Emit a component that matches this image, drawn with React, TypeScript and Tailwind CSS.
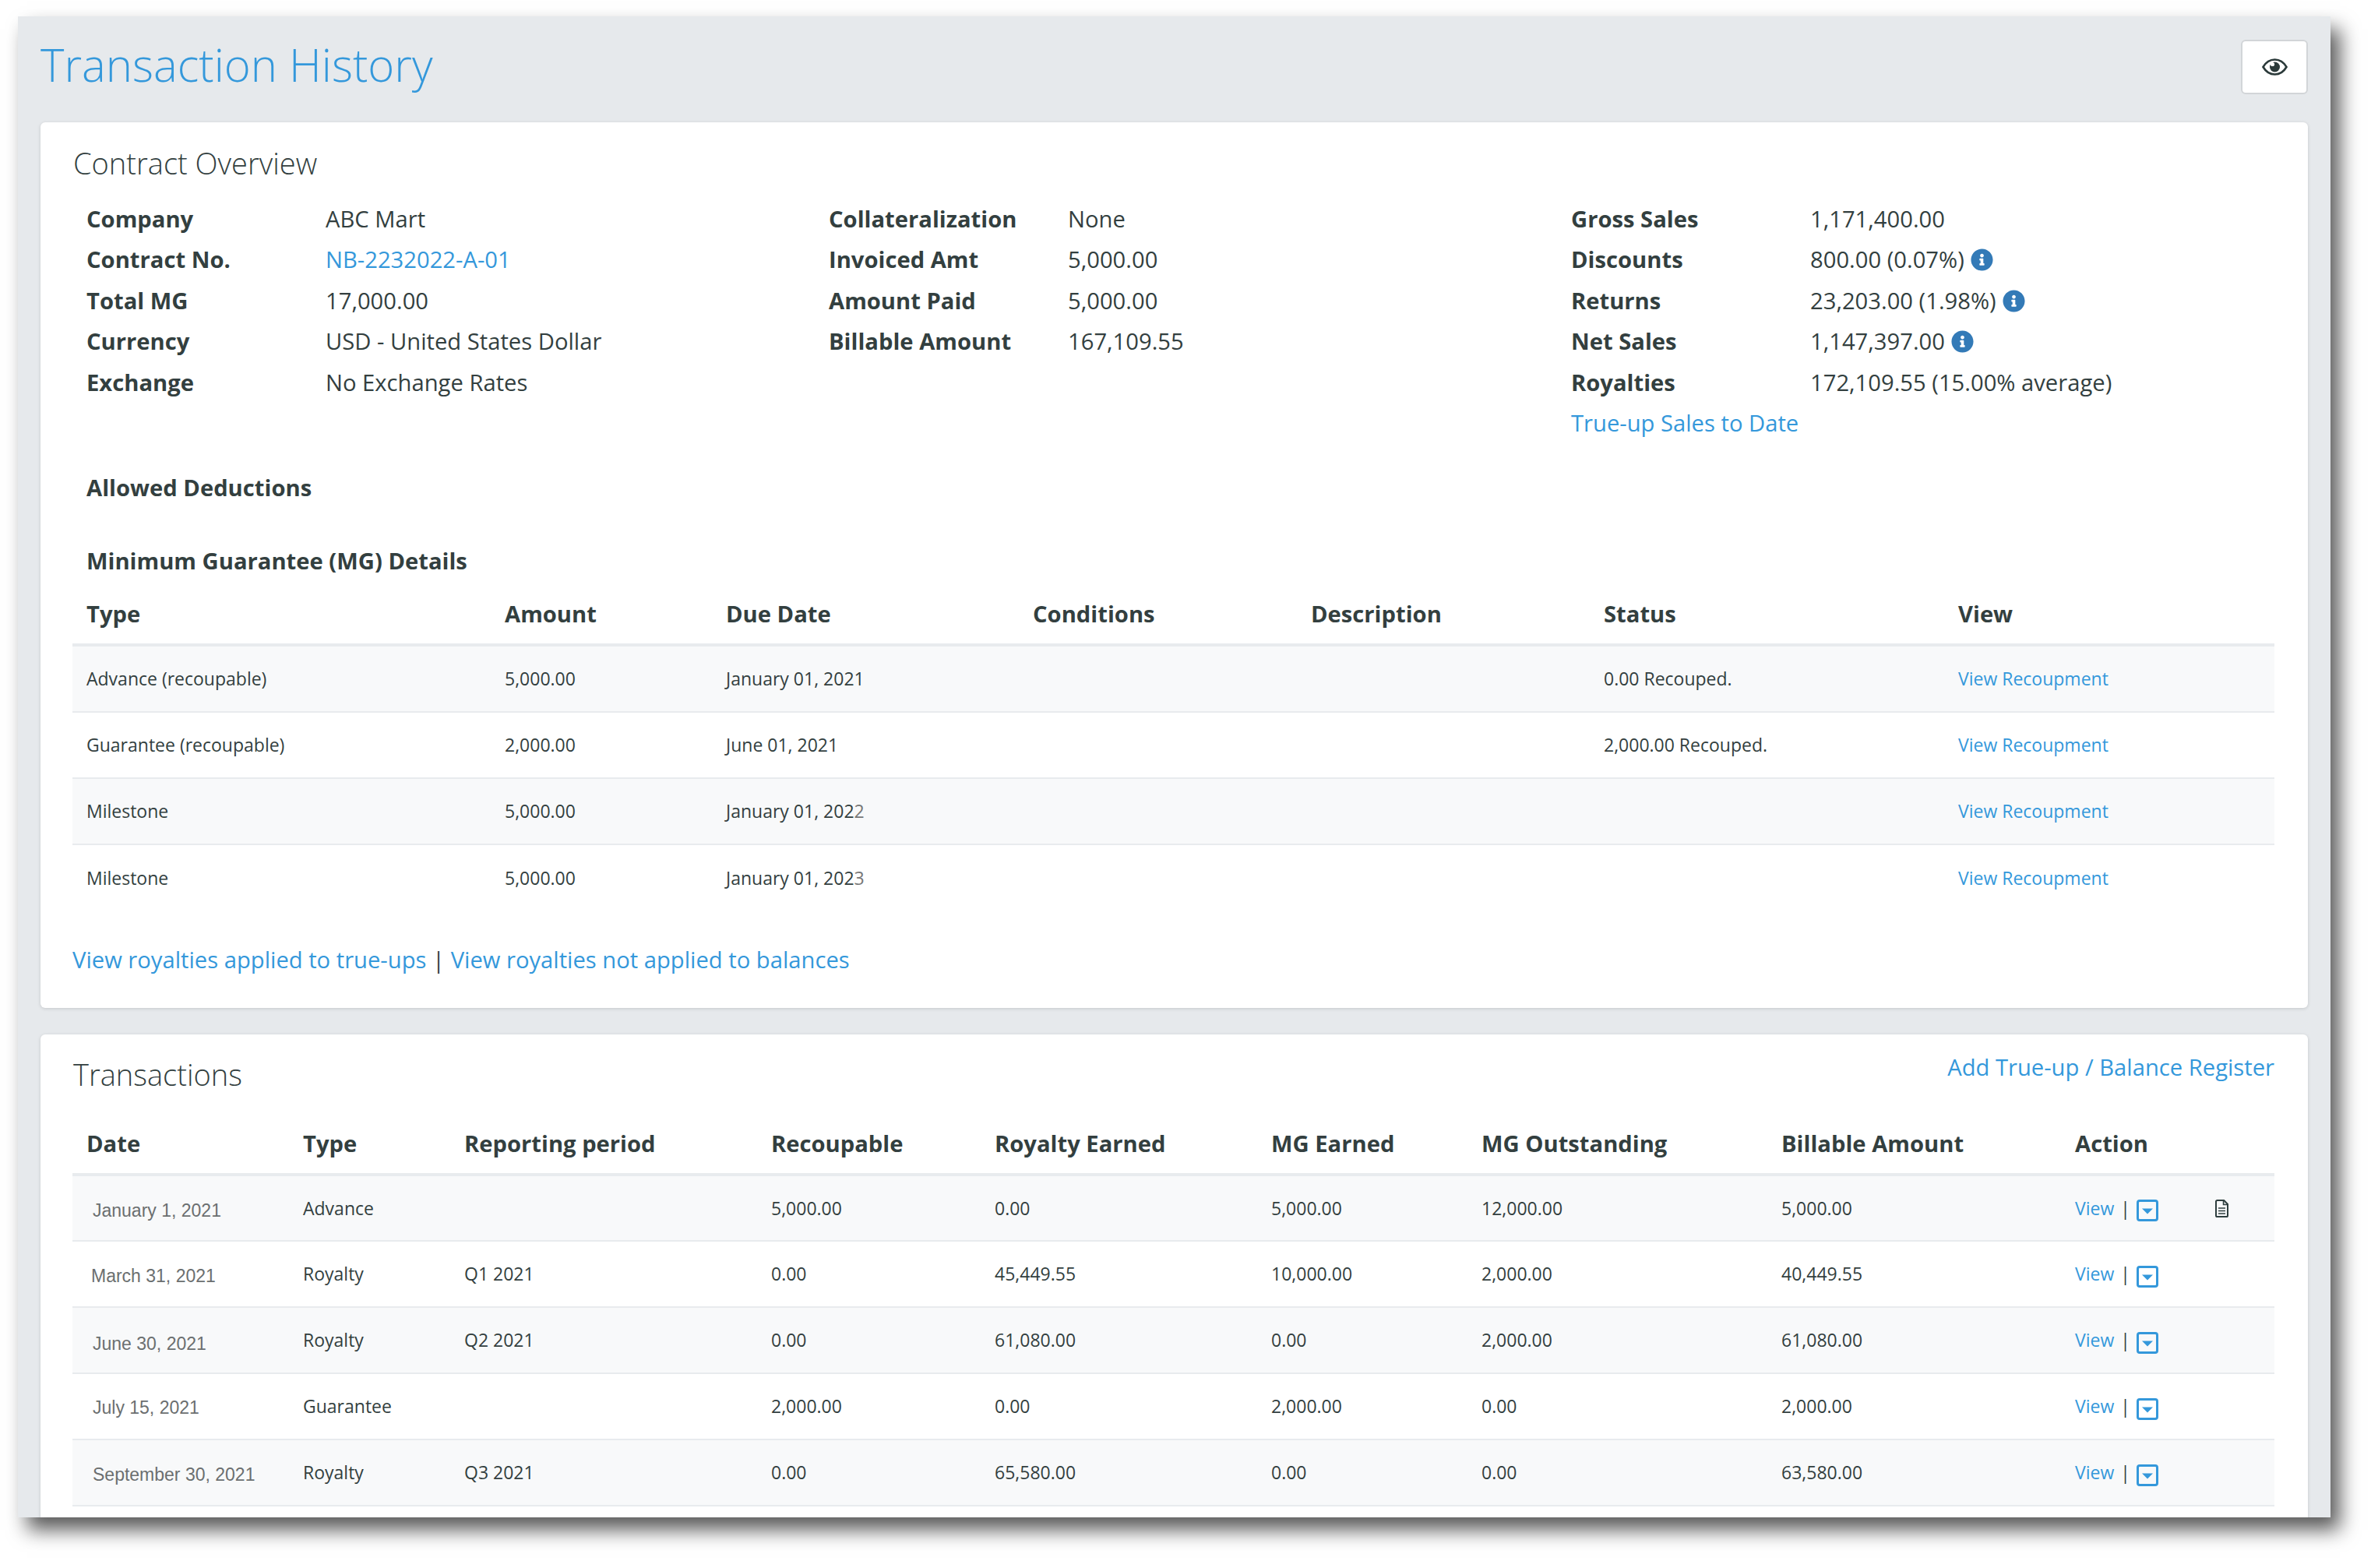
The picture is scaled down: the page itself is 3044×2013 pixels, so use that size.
import { FaInfoCircle } from "react-icons/fa";

const link = "text-[#3498db]";

const overview = [
  [
    ["Company", "ABC Mart"],
    ["Contract No.", "NB-2232022-A-01", "link"],
    ["Total MG", "17,000.00"],
    ["Currency", "USD - United States Dollar"],
    ["Exchange", "No Exchange Rates"],
  ],
  [
    ["Collateralization", "None"],
    ["Invoiced Amt", "5,000.00"],
    ["Amount Paid", "5,000.00"],
    ["Billable Amount", "167,109.55"],
  ],
  [
    ["Gross Sales", "1,171,400.00"],
    ["Discounts", "800.00 (0.07%)", "info"],
    ["Returns", "23,203.00 (1.98%)", "info"],
    ["Net Sales", "1,147,397.00", "info"],
    ["Royalties", "172,109.55 (15.00% average)"],
  ],
];

const mgRows = [
  ["Advance (recoupable)", "5,000.00", "January 01, 202", "1", "0.00 Recouped."],
  ["Guarantee (recoupable)", "2,000.00", "June 01, 202", "1", "2,000.00 Recouped."],
  ["Milestone", "5,000.00", "January 01, 202", "2", ""],
  ["Milestone", "5,000.00", "January 01, 202", "3", ""],
];

const txRows = [
  ["January 1, 2021", "Advance", "", "5,000.00", "0.00", "5,000.00", "12,000.00", "5,000.00"],
  ["March 31, 2021", "Royalty", "Q1 2021", "0.00", "45,449.55", "10,000.00", "2,000.00", "40,449.55"],
  ["June 30, 2021", "Royalty", "Q2 2021", "0.00", "61,080.00", "0.00", "2,000.00", "61,080.00"],
  ["July 15, 2021", "Guarantee", "", "2,000.00", "0.00", "2,000.00", "0.00", "2,000.00"],
  ["September 30, 2021", "Royalty", "Q3 2021", "0.00", "65,580.00", "0.00", "0.00", "63,580.00"],
];

// the dates sit a little lower than the rest of their row, not all by the same amount
const dateCell = [
  "pl-[9px] pt-[6px]",
  "pl-[7px] pt-[6px]",
  "pl-[9px] pt-[9px]",
  "pl-[9px] pt-[4px]",
  "pl-[9px] pt-[6px]",
];

const Caret = () => (
  <svg viewBox="0 0 28 28" className="w-[28px] h-[28px] text-[#3498db]">
    <rect x="1.5" y="1.5" width="25" height="25" rx="2.5" fill="none" stroke="currentColor" strokeWidth="3" />
    <path d="M7 11.5h14L14 18.5z" fill="currentColor" />
  </svg>
);

const Doc = () => (
  <svg viewBox="0 0 17 23" className="w-[17px] h-[23px] text-[#2f3f3f]">
    <path d="M2.6 1h8.6l4.8 5v14.4a1.6 1.6 0 0 1-1.6 1.6H2.6A1.6 1.6 0 0 1 1 20.4V2.6A1.6 1.6 0 0 1 2.6 1z" fill="none" stroke="currentColor" strokeWidth="2" />
    <path d="M10.6 1.5v5h5M4 11h9M4 14.5h9M4 18h9" fill="none" stroke="currentColor" strokeWidth="1.7" />
  </svg>
);

const Eye = () => (
  <svg viewBox="0 0 33 22" className="w-[33px] h-[22px] text-[#2b3a3a]">
    <path d="M1.5 11C5 5 10 1.5 16.5 1.5S28 5 31.5 11C28 17 23 20.5 16.5 20.5S5 17 1.5 11z" fill="none" stroke="currentColor" strokeWidth="2.6" />
    <circle cx="16.5" cy="11" r="6.5" fill="currentColor" />
    <circle cx="13.5" cy="7.5" r="2.6" fill="#fff" />
  </svg>
);

export default function App() {
  return (
    <div className="w-[3044px] h-[2013px] bg-white pl-[23px] pt-[21px] font-['Open_Sans',sans-serif] text-[#333f3f]">
      <div className="w-[2969px] h-[1927px] bg-[#e6e9ec] overflow-hidden shadow-[12px_16px_24px_rgba(0,0,0,0.65)] px-[29px]">
        {/* Header */}
        <div className="h-[136px] flex items-start justify-between">
          <h1 className="mt-[22px] text-[58px] leading-[80px] font-light text-[#3498db]">Transaction History</h1>
          <button className="mt-[30px] w-[86px] h-[70px] bg-white border-2 border-[#d2d5d8] rounded-[6px] flex items-center justify-center">
            <Eye />
          </button>
        </div>

        {/* Contract Overview */}
        <section className="h-[1137px] bg-white rounded-[6px] shadow-[0_1px_4px_rgba(0,0,0,0.15)] pl-[41px] pr-[43px] pt-[26px]">
          <h2 className="pl-[1px] text-[38px] leading-[52px] font-light">Contract Overview</h2>
          <div className="mt-[20px] grid grid-cols-[953px_953px_1fr] text-[29.2px] leading-[52.4px]">
            {overview.map((col, i) => (
              <div key={i} className="pl-[18px]">
                {col.map(([label, value, kind]) => (
                  <div key={label} className="flex">
                    <span className="w-[307px] font-bold shrink-0">{label}</span>
                    <span className={`flex items-center gap-[8px] ${kind === "link" ? link : ""}`}>
                      {value}
                      {kind === "info" && <FaInfoCircle className="w-[29px] h-[29px] text-[#337ab7]" />}
                    </span>
                  </div>
                ))}
                {i === 2 && <div className={link}>True-up Sales to Date</div>}
              </div>
            ))}
          </div>
          <div className="mt-[37px] pl-[18px] text-[29.2px] leading-[40px] font-bold">Allowed Deductions</div>
          <div className="mt-[54px] pl-[18px] text-[29.2px] leading-[40px] font-bold">Minimum Guarantee (MG) Details</div>

          <table className="mt-[10px] w-full table-fixed border-collapse">
            <thead>
              <tr className="h-[78px] border-b-4 border-[#e8ebee] text-[29.2px] text-left">
                <th className="w-[555px] pl-[18px] font-bold">Type</th>
                <th className="w-[284px] font-bold">Amount</th>
                <th className="w-[394px] font-bold">Due Date</th>
                <th className="w-[357px] font-bold">Conditions</th>
                <th className="w-[376px] font-bold">Description</th>
                <th className="w-[455px] font-bold">Status</th>
                <th className="font-bold">View</th>
              </tr>
            </thead>
            <tbody className="text-[23px]">
              {mgRows.map((r, i) => (
                <tr key={i} className={`h-[85.3px] ${i < 3 ? "border-b-2 border-[#e8ebee]" : ""} ${i % 2 === 0 ? "bg-[#f8f9fa]" : ""}`}>
                  <td className="pl-[18px]">{r[0]}</td>
                  <td>{r[1]}</td>
                  <td>{r[2]}<span className={i > 1 ? "text-[#777]" : ""}>{r[3]}</span></td>
                  <td></td>
                  <td></td>
                  <td>{r[4]}</td>
                  <td className={link}>View Recoupment</td>
                </tr>
              ))}
            </tbody>
          </table>

          <div className="mt-[42px] text-[29.2px] leading-[40px]">
            <span className={link}>View royalties applied to true-ups</span>
            <span> | </span>
            <span className={link}>View royalties not applied to balances</span>
          </div>
        </section>

        {/* Transactions */}
        <section className="mt-[34px] h-[700px] bg-white rounded-[6px] shadow-[0_1px_4px_rgba(0,0,0,0.15)] pl-[41px] pr-[43px] pt-[22px]">
          <div className="flex justify-between items-start">
            <h2 className="mt-[3px] pl-[1px] text-[38px] leading-[52px] font-light">Transactions</h2>
            <span className={`text-[29.2px] leading-[40px] ${link}`}>Add True-up / Balance Register</span>
          </div>
          <table className="mt-[27px] w-full table-fixed border-collapse">
            <thead>
              <tr className="h-[76px] border-b-4 border-[#e8ebee] text-[29.2px] text-left">
                <th className="w-[296px] pl-[18px] font-bold">Date</th>
                <th className="w-[207px] font-bold">Type</th>
                <th className="w-[394px] font-bold">Reporting period</th>
                <th className="w-[287px] font-bold">Recoupable</th>
                <th className="w-[355px] font-bold">Royalty Earned</th>
                <th className="w-[270px] font-bold">MG Earned</th>
                <th className="w-[385px] font-bold">MG Outstanding</th>
                <th className="w-[377px] font-bold">Billable Amount</th>
                <th className="font-bold">Action</th>
              </tr>
            </thead>
            <tbody className="text-[23px]">
              {txRows.map((r, i) => (
                <tr key={i} className={`h-[85px] border-b-2 border-[#e8ebee] ${i % 2 === 0 ? "bg-[#f8f9fa]" : ""}`}>
                  <td className={`${dateCell[i]} font-['Liberation_Sans',sans-serif] text-[#6b6f70]`}>
                    <span className="ml-[17px]">{r[0]}</span>
                  </td>
                  <td>{r[1]}</td>
                  <td>{r[2]}</td>
                  <td>{r[3]}</td>
                  <td>{r[4]}</td>
                  <td>{r[5]}</td>
                  <td>{r[6]}</td>
                  <td>{r[7]}</td>
                  <td>
                    <div className="flex items-center">
                      <span className={link}>View</span>
                      <span className="ml-[8px] mr-[8px]">|</span>
                      <span className="mt-[6px]"><Caret /></span>
                      {i === 0 && <span className="ml-[73px]"><Doc /></span>}
                    </div>
                  </td>
                </tr>
              ))}
            </tbody>
          </table>
        </section>
      </div>
    </div>
  );
}
